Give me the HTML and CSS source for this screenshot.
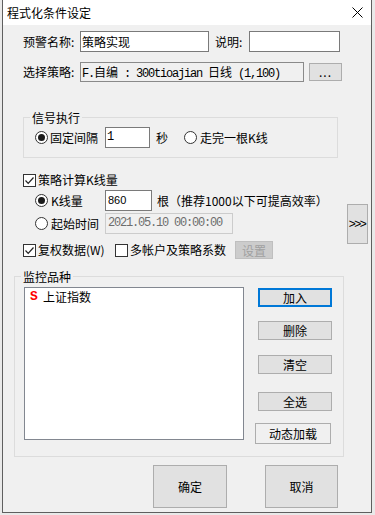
FILE: index.html
```html
<!DOCTYPE html>
<html>
<head>
<meta charset="utf-8">
<link rel="stylesheet" href="styles.css">
</head>
<body>
<div class="win">
  <div class="titlebar">
    <span class="title">程式化条件设定</span>
    <svg class="close" width="11" height="11" viewBox="0 0 11 11"><path d="M0.5 0.5 L10.5 10.5 M10.5 0.5 L0.5 10.5" stroke="#000" stroke-width="1" fill="none"/></svg>
  </div>

  <div class="row r1">
    <span class="lbl w57">预警名称:</span>
    <div class="input name">策略实现</div>
    <span class="lbl w34 ml6">说明:</span>
    <div class="input desc"></div>
  </div>

  <div class="row r2">
    <span class="lbl w57">选择策略:</span>
    <div class="field mono">F.<span class="cjk">自编</span> : 300tioajian <span class="cjk">日线</span> (1,100)</div>
    <div class="btn dots">...</div>
  </div>

  <div class="group g1">
    <div class="gtitle">信号执行</div>
    <div class="grow">
      <span class="radio on"></span><span class="rt1">固定间隔</span>
      <div class="input sec mono">1</div>
      <span class="sectxt">秒</span>
      <span class="radio r2nd"></span><span class="rt2">走完一根K线</span>
    </div>
  </div>

  <div class="row ck1">
    <span class="check on"><svg width="11" height="11" viewBox="0 0 11 11"><path d="M1.5 5.5 L4.2 8.3 L9.5 2.5" stroke="#222" stroke-width="1.2" fill="none"/></svg></span>
    <span class="cktext">策略计算K线量</span>
  </div>

  <div class="kwrap">
    <div class="kcol">
      <div class="krow k1">
        <span class="radio on"></span><span class="rlabel">K线量</span>
        <div class="input num">860</div>
        <span class="hint">根（推荐1000以下可提高效率）</span>
      </div>
      <div class="krow k2">
        <span class="radio"></span><span class="rlabel">起始时间</span>
        <div class="input date mono">2021.05.10 00:00:00</div>
      </div>
      <div class="row fq">
        <span class="check on"><svg width="11" height="11" viewBox="0 0 11 11"><path d="M1.5 5.5 L4.2 8.3 L9.5 2.5" stroke="#222" stroke-width="1.2" fill="none"/></svg></span>
        <span class="cktext fqtext">复权数据(W)</span>
        <span class="check"></span>
        <span class="cktext mtext">多帐户及策略系数</span>
        <div class="btn disabled set">设置</div>
      </div>
    </div>
    <div class="btn more">&gt;&gt;&gt;</div>
  </div>

  <div class="group g2">
    <div class="gtitle">监控品种</div>
    <div class="gbody">
      <div class="list">
        <div class="item"><span class="s">S</span><span>上证指数</span></div>
      </div>
      <div class="bcol">
        <div class="btn side focus b1">加入</div>
        <div class="btn side b2">删除</div>
        <div class="btn side b3">清空</div>
        <div class="btn side b4">全选</div>
        <div class="btn side light b5">动态加载</div>
      </div>
    </div>
  </div>

  <div class="bottom">
    <div class="btn big ok">确定</div>
    <div class="btn big cancel">取消</div>
  </div>
</div>
</body>
</html>
```

FILE: styles.css
```css
* { box-sizing: border-box; }
html, body { margin: 0; padding: 0; }
body {
  width: 375px;
  height: 515px;
  overflow: hidden;
  background: #e9e9e9;
  font-family: "Noto Sans CJK SC", "Noto Sans", sans-serif;
  font-size: 12px;
  color: #000;
}
.win {
  margin-left: 2px;
  width: 370px;
  height: 513px;
  background: #f0f0f0;
  border: 1px solid #5f5f5f;
  border-top: none;
  display: flex;
  flex-direction: column;
}
.titlebar {
  height: 25px;
  background: #fff;
  display: flex;
  align-items: center;
  padding-left: 4px;
  flex: none;
}
.title { font-size: 12px; line-height: 16px; }
.close { margin-left: auto; margin-right: 8px; margin-top: -1px; }

.row { display: flex; align-items: center; padding-left: 20px; flex: none; }
.lbl { line-height: 16px; white-space: nowrap; }
.w57 { width: 57px; }
.w34 { width: 34px; }
.ml6 { margin-left: 6px; }

.input {
  height: 21px;
  background: #fff;
  border: 1px solid #7a7a7a;
  padding-left: 1px;
  line-height: 19px;
  white-space: nowrap;
  overflow: hidden;
}
.mono { font-family: "Liberation Mono", "Noto Sans CJK SC", monospace; letter-spacing: -1.2px; }
.cjk { font-family: "Noto Sans CJK SC", sans-serif; letter-spacing: 0; }

.r1 { margin-top: 6px; height: 21px; }
.name { width: 129px; }
.desc { width: 91px; }

.r2 { margin-top: 10px; height: 20px; }
.field {
  width: 224px;
  height: 20px;
  border: 1px solid #8a8a8a;
  background: #f0f0f0;
  padding-left: 1px;
  line-height: 18px;
  white-space: nowrap;
  overflow: hidden;
}
.btn {
  display: flex;
  align-items: center;
  justify-content: center;
  background: #e1e1e1;
  border: 1px solid #adadad;
  white-space: nowrap;
  flex: none;
}
.dots { margin-left: 5px; width: 33px; height: 18px; letter-spacing: 1px; padding-bottom: 1px; }

.group { border: 1px solid #dcdcdc; flex: none; }
.gtitle {
  width: fit-content;
  height: 16px;
  line-height: 16px;
  margin: -8px 0 0 6px;
  padding: 0 2px;
  background: #f0f0f0;
}
.g1 { margin: 35px 0 0 20px; width: 315px; padding-bottom: 9px; }
.grow { display: flex; align-items: center; height: 21px; margin-top: 1px; padding-left: 11px; }

.radio {
  width: 13px;
  height: 13px;
  border-radius: 50%;
  border: 1px solid #333;
  background: #fff;
  flex: none;
  display: flex;
  align-items: center;
  justify-content: center;
}
.radio.on::after {
  content: "";
  width: 7px;
  height: 7px;
  border-radius: 50%;
  background: #1a1a1a;
}
.rt1 { margin-left: 2px; width: 55px; }
.sec { width: 45px; }
.sectxt { margin-left: 6px; width: 12px; }
.r2nd { margin-left: 16px; }
.rt2 { margin-left: 3px; }

.check {
  width: 13px;
  height: 13px;
  border: 1px solid #333;
  background: #fff;
  flex: none;
  display: flex;
  align-items: center;
  justify-content: center;
}
.check svg { display: block; }
.cktext { margin-left: 2px; line-height: 16px; white-space: nowrap; }

.ck1 { margin-top: 14px; height: 16px; }

.kwrap { display: flex; margin-top: 2px; flex: none; }
.kcol { display: flex; flex-direction: column; flex: 1; }
.krow { display: flex; align-items: center; height: 21px; padding-left: 32px; }
.k2 { margin-top: 2px; }
.rlabel { margin-left: 3px; width: 54px; white-space: nowrap; }
.num { width: 47px; font-family: "Liberation Sans", sans-serif; font-size: 11px; padding-left: 2px; }
.hint { margin-left: 5px; white-space: nowrap; }
.date {
  width: 128px;
  background: #f0f0f0;
  border-color: #cccccc;
  color: #6d6d6d;
  padding-left: 2px;
}
.fq { margin-top: 7px; height: 18px; }
.fqtext { width: 77px; }
.mtext { width: 105px; }
.set { width: 38px; height: 18px; background: #cccccc; border-color: #bfbfbf; color: #a0a0a0; }
.more {
  width: 21px;
  height: 40px;
  margin-top: 14px;
  margin-right: 3px;
  font-family: "Liberation Sans", sans-serif;
  font-size: 12px;
  letter-spacing: -1.5px;
  padding-right: 1px;
}

.g2 { margin: 17px 0 0 11px; width: 330px; padding-bottom: 12px; }
.gbody { display: flex; margin-top: 2px; padding-left: 9px; }
.list {
  width: 220px;
  height: 153px;
  background: #fff;
  border: 1px solid #828790;
}
.item { display: flex; height: 18px; line-height: 18px; padding-left: 5px; }
.s {
  width: 13px;
  color: #ff0000;
  font-family: "Liberation Mono", monospace;
  font-weight: bold;
  font-size: 13px;
}
.bcol { display: flex; flex-direction: column; margin-left: 14px; }
.side { width: 74px; height: 19px; line-height: 16px; }
.focus { border: 2px solid #0078d7; }
.b1 { margin-top: 1px; }
.b2 { margin-top: 14px; }
.b3 { margin-top: 15px; }
.b4 { margin-top: 18px; }
.b5 { margin-top: 12px; margin-left: -3px; width: 76px; height: 21px; }
.light { background: #f0f0f0; }

.bottom { display: flex; margin-top: 8px; flex: none; }
.big { height: 43px; }
.ok { margin-left: 150px; width: 74px; }
.cancel { margin-left: 38px; width: 73px; }
```
